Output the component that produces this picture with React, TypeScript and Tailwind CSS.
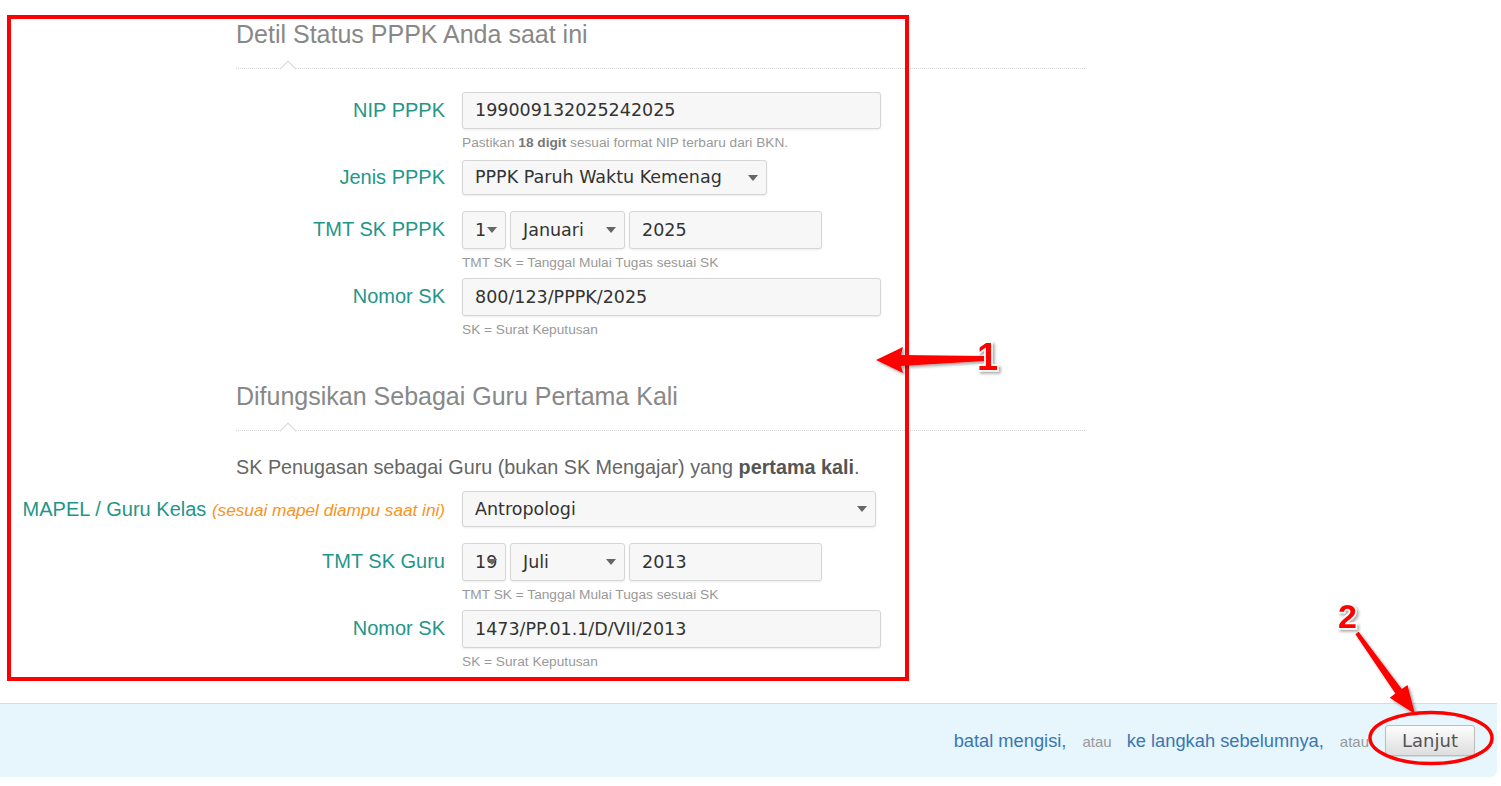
import React from "react";

const Caret = () => (
  <svg width="10" height="6" viewBox="0 0 10 6" className="absolute right-[8px] top-1/2 -translate-y-1/2">
    <polygon points="0,0 10,0 5,6" fill="#666" />
  </svg>
);

function Select({ value, w, h = "h-[37px]" }: { value: string; w: string; h?: string }) {
  return (
    <div
      className={`relative ${w} ${h} flex items-center pl-[12px] bg-[#f7f7f7] border border-[#d6d6d6] rounded-[3px] shadow-[0_1px_2px_rgba(0,0,0,0.08)] text-[#333] text-[17.5px] font-['DejaVu_Sans',sans-serif] overflow-hidden whitespace-nowrap`}
    >
      {value}
      <Caret />
    </div>
  );
}

function Input({ value, w }: { value: string; w: string }) {
  return (
    <div
      className={`${w} h-[37px] flex items-center pl-[12px] bg-[#f7f7f7] border border-[#d6d6d6] rounded-[3px] shadow-[0_1px_2px_rgba(0,0,0,0.08)] text-[#333] text-[17.5px] font-['DejaVu_Sans',sans-serif] whitespace-nowrap`}
    >
      {value}
    </div>
  );
}

function Help({ children }: { children: React.ReactNode }) {
  return <div className="mt-[6px] text-[13.7px] leading-[16px] text-[#999]">{children}</div>;
}

function Row({
  label,
  children,
  className = "",
  h = "leading-[36px]",
}: {
  label: React.ReactNode;
  children: React.ReactNode;
  className?: string;
  h?: string;
}) {
  return (
    <div className={`flex items-start ${className}`}>
      <div className={`w-[445px] shrink-0 text-right text-[20px] ${h} text-[#23968a] whitespace-nowrap`}>{label}</div>
      <div className="ml-[17px]">{children}</div>
    </div>
  );
}

function Heading({ children, className = "" }: { children: React.ReactNode; className?: string }) {
  return (
    <div className={`ml-[236px] w-[849px] ${className}`}>
      <h2 className="text-[25px] leading-[28px] text-[#888]">{children}</h2>
      <div className="relative h-[21px] border-b border-dotted border-[#d8d8d8]">
        <div className="absolute left-[46px] top-[15px] w-[12px] h-[12px] rotate-45 bg-white border-t border-l border-[#d8d8d8]" />
      </div>
    </div>
  );
}

const boxCls =
  "h-[38px] flex items-center pl-[12px] bg-[#f7f7f7] border border-[#d6d6d6] rounded-[3px] shadow-[0_1px_2px_rgba(0,0,0,0.08)] text-[#333] text-[17.5px] font-['DejaVu_Sans',sans-serif] whitespace-nowrap";

export default function App() {
  return (
    <div className="relative w-[1501px] h-[786px] bg-white overflow-hidden font-['Liberation_Sans',Arial,sans-serif]">
      <div className="pt-[20px]">
        <Heading>Detil Status PPPK Anda saat ini</Heading>

        <Row label="NIP PPPK" className="mt-[23px]">
          <Input value="199009132025242025" w="w-[419px]" />
          <Help>
            Pastikan <b className="text-[#777]">18 digit</b> sesuai format NIP terbaru dari BKN.
          </Help>
        </Row>

        <Row label="Jenis PPPK" className="mt-[9px]" h="leading-[34px]">
          <Select value="PPPK Paruh Waktu Kemenag" w="w-[305px]" h="h-[35px]" />
        </Row>

        <Row label="TMT SK PPPK" className="mt-[16px]">
          <div className="flex gap-[4px]">
            <Select value="1" w="w-[44px]" h="h-[38px]" />
            <Select value="Januari" w="w-[115px]" h="h-[38px]" />
            <div className={`w-[193px] ${boxCls}`}>2025</div>
          </div>
          <Help>TMT SK = Tanggal Mulai Tugas sesuai SK</Help>
        </Row>

        <Row label="Nomor SK" className="mt-[7px]">
          <div className={`w-[419px] ${boxCls}`}>800/123/PPPK/2025</div>
          <Help>SK = Surat Keputusan</Help>
        </Row>

        <Heading className="mt-[44px]">Difungsikan Sebagai Guru Pertama Kali</Heading>

        <p className="ml-[236px] mt-[25px] text-[19.8px] leading-[22px] text-[#666]">
          SK Penugasan sebagai Guru (bukan SK Mengajar) yang <b className="text-[#555]">pertama kali</b>.
        </p>

        <Row
          label={
            <>
              MAPEL / Guru Kelas{" "}
              <i className="text-[17.2px] text-[#f7941d]">(sesuai mapel diampu saat ini)</i>
            </>
          }
          className="mt-[13px]"
        >
          <Select value="Antropologi" w="w-[414px]" h="h-[36px]" />
        </Row>

        <Row label="TMT SK Guru" className="mt-[15px]">
          <div className="flex gap-[4px]">
            <Select value="19" w="w-[44px]" h="h-[38px]" />
            <Select value="Juli" w="w-[115px]" h="h-[38px]" />
            <div className={`w-[193px] ${boxCls}`}>2013</div>
          </div>
          <Help>TMT SK = Tanggal Mulai Tugas sesuai SK</Help>
        </Row>

        <Row label="Nomor SK" className="mt-[7px]">
          <div className={`w-[419px] ${boxCls}`}>1473/PP.01.1/D/VII/2013</div>
          <Help>SK = Surat Keputusan</Help>
        </Row>

        <div className="mt-[33px] w-[1497px] h-[74px] bg-[#e7f5fd] border-t border-[#cfdfea] rounded-br-[6px] flex items-center justify-end pr-[22px]">
          <div className="flex items-baseline">
            <span className="text-[18.3px] text-[#3a77b2]">batal mengisi,</span>
            <span className="ml-[16px] text-[15px] text-[#999]">atau</span>
            <span className="ml-[15px] text-[18.3px] text-[#3a77b2]">ke langkah sebelumnya,</span>
            <span className="ml-[16px] text-[15px] text-[#999]">atau</span>
          </div>
          <button className="ml-[16px] w-[90px] h-[31px] rounded-[3px] border border-[#bdbdbd] bg-gradient-to-b from-[#fdfdfd] to-[#dedede] text-[18px] text-[#555] font-['DejaVu_Sans',sans-serif] shadow-[0_1px_1px_rgba(0,0,0,0.1)]">
            Lanjut
          </button>
        </div>
      </div>

      <svg className="absolute inset-0 pointer-events-none" width="1501" height="786" viewBox="0 0 1501 786">
        <defs>
          <filter id="sh" x="-20%" y="-20%" width="140%" height="140%">
            <feDropShadow dx="2" dy="2" stdDeviation="1.5" floodColor="#000" floodOpacity="0.35" />
          </filter>
        </defs>
        <rect x="9" y="17" width="898" height="662" fill="none" stroke="#ff0000" strokeWidth="4" />
        <polygon
          filter="url(#sh)"
          fill="#ff0000"
          points="876,360 903,347 901,355 984,356 984,361 901,366 903,373"
        />
        <text
          x="977"
          y="370"
          fontFamily="Liberation Sans, Arial, sans-serif"
          fontWeight="bold"
          fontSize="38"
          fill="#ff0000"
          stroke="#fff"
          strokeWidth="3"
          paintOrder="stroke"
          filter="url(#sh)"
        >
          1
        </text>
        <polygon
          filter="url(#sh)"
          fill="#ff0000"
          points="1415,714 1407.5,684.9 1401.8,689 1358.6,631.8 1355.4,634.2 1395.4,693.6 1389.7,697.7"
        />
        <text
          x="1338"
          y="628"
          fontFamily="Liberation Sans, Arial, sans-serif"
          fontWeight="bold"
          fontSize="34"
          fill="#ff0000"
          stroke="#fff"
          strokeWidth="3"
          paintOrder="stroke"
          filter="url(#sh)"
        >
          2
        </text>
        <ellipse cx="1431" cy="738" rx="61" ry="25.5" fill="none" stroke="#ff0000" strokeWidth="3.5" />
      </svg>
    </div>
  );
}
